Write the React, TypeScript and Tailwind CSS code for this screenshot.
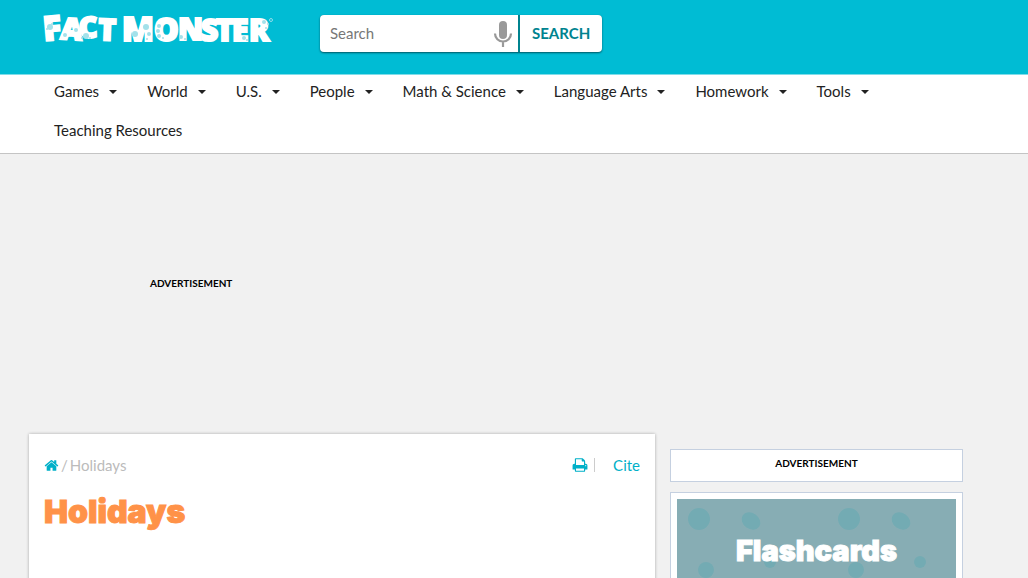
import React from 'react'

const navItems = [
    { label: 'Games', menu: true },
    { label: 'World', menu: true },
    { label: 'U.S.', menu: true },
    { label: 'People', menu: true },
    { label: 'Math & Science', menu: true },
    { label: 'Language Arts', menu: true },
    { label: 'Homework', menu: true },
    { label: 'Tools', menu: true },
    { label: 'Teaching Resources', menu: false },
]

const logoLetters = [
    { char: 'F', x: 15, y: 41, size: 34, turn: -5 },
    { char: 'A', x: 31, y: 39, size: 30, turn: 4 },
    { char: 'C', x: 50, y: 38, size: 29, turn: -2 },
    { char: 'T', x: 69, y: 40, size: 30, turn: 2 },
    { char: 'M', x: 93, y: 41, size: 33, turn: 0 },
    { char: 'O', x: 125, y: 41, size: 31, turn: 0 },
    { char: 'N', x: 149, y: 40, size: 30, turn: 0 },
    { char: 'S', x: 172, y: 41, size: 30, turn: 0 },
    { char: 'T', x: 187, y: 41, size: 30, turn: 0 },
    { char: 'E', x: 203, y: 41, size: 30, turn: 0 },
    { char: 'R', x: 220, y: 41, size: 30, turn: 0 },
]

const logoSpots = [
    [21, 27, 3], [23, 24, 1], [18, 29, 1], [47, 30, 2], [36, 35, 2], [57, 36, 3], [61, 38, 1], [53, 38, 1],
    [106, 34, 3], [117, 27, 3], [120, 34, 2], [118, 39, 1], [130, 26, 2], [129, 31, 2], [130, 36, 2], [134, 38, 1],
    [152, 37, 2], [156, 39, 1], [215, 38, 2], [218, 40, 1], [235, 22, 2], [239, 24, 1], [237, 28, 1],
]

const Logo = () => (
    <a href="#" aria-label="Fact Monster" className="block">
        <svg viewBox="0 0 245 50" className="block h-[50px] w-[245px]">
            <g fill="#fff" stroke="#fff" strokeWidth="2" fontFamily="Open Sans, sans-serif" fontWeight="800">
                {logoLetters.map((l, index) => (
                    <text key={index} x={l.x} y={l.y} fontSize={l.size} transform={`rotate(${l.turn} ${l.x} ${l.y})`}>
                        {l.char}
                    </text>
                ))}
            </g>
            <g fill="#a3e1ea">
                {logoSpots.map(([cx, cy, r], index) => (
                    <circle key={index} cx={cx} cy={cy} r={r} />
                ))}
            </g>
            <circle cx="242" cy="20" r="1.5" fill="none" stroke="#8fdcea" />
        </svg>
    </a>
)

const SearchForm = () => (
    <form className="flex h-[37px] rounded bg-[#00838f] shadow-[0_1px_2px_rgba(0,60,70,0.8)]" onSubmit={(e) => e.preventDefault()}>
        <div className="flex w-[198px] items-center rounded-l bg-white pl-2.5 pr-[5px]">
            <input
                type="text"
                aria-label="Search"
                placeholder="Search"
                className="min-w-0 flex-1 bg-transparent text-[15px] outline-none placeholder:text-[#777]"
            />
            <button type="button" aria-label="Search by voice">
                <svg viewBox="0 0 20 28" className="block h-7 w-5">
                    <rect x="6" y="1" width="8" height="18" rx="4" fill="#999" />
                    <path d="M2 13.500a8 8 0 0 0 16 0M10 21.500v5.500" fill="none" stroke="#999" strokeWidth="2.200" />
                </svg>
            </button>
        </div>
        <button type="submit" className="ml-0.5 rounded-r bg-white px-3 text-[15px] font-bold text-[#00838f]">
            SEARCH
        </button>
    </form>
)

const Nav = () => (
    <nav className="border-b border-[#c4c4c4] bg-white pl-[39px]">
        <ul className="flex flex-wrap">
            {navItems.map((item) => (
                <li key={item.label}>
                    <a href="#" className="flex h-[39px] items-center gap-2.5 px-[15px] pb-1.5 text-[15px] text-[#222]">
                        {item.label}
                        {item.menu && <span className="border-x-4 border-t-4 border-x-transparent border-t-[#222]" />}
                    </a>
                </li>
            ))}
        </ul>
    </nav>
)

const HomeIcon = () => (
    <svg viewBox="0 0 1792 1792" fill="currentColor" className="h-[15px] w-[15px]">
        <path d="M1472 992v480q0 26-19 45t-45 19h-384v-384h-256v384h-384q-26 0-45-19t-19-45v-480q0-1 .5-3t.5-3l575-474 575 474q1 2 1 6zm223-69l-62 74q-8 9-21 11h-3q-13 0-21-7l-692-577-692 577q-12 8-24 7-13-2-21-11l-62-74q-8-10-7-23.5t11-21.5l719-599q32-26 76-26t76 26l244 204v-195q0-14 9-23t23-9h192q14 0 23 9t9 23v408l219 182q10 8 11 21.5t-7 23.5z" />
    </svg>
)

const PrintIcon = () => (
    <svg viewBox="0 0 1792 1792" fill="currentColor" className="h-4 w-4">
        <path d="M448 1536h896v-256h-896v256zm0-640h896v-384h-160q-40 0-68-28t-28-68v-160h-640v640zm1152 64q0-26-19-45t-45-19-45 19-19 45 19 45 45 19 45-19 19-45zm128 0v416q0 13-9.5 22.5t-22.5 9.5h-224v160q0 40-28 68t-68 28h-960q-40 0-68-28t-28-68v-160h-224q-13 0-22.5-9.5t-9.5-22.5v-416q0-79 56.5-135.5t135.5-56.5h64v-544q0-40 28-68t68-28h672q40 0 88 20t76 48l152 152q28 28 48 76t20 88v256h64q79 0 135.5 56.5t56.5 135.5z" />
    </svg>
)

const Article = () => (
    <article className="min-w-0 flex-1 bg-white px-[15px] pt-[19px] shadow-[0_0_3px_rgba(0,0,0,0.3)]">
        <div className="flex items-center justify-between text-[15px] leading-6">
            <div className="flex items-center gap-0.5 text-[#bbb]">
                <a href="#" aria-label="Home" className="text-[#00b0c8]">
                    <HomeIcon />
                </a>
                <span className="flex gap-0.5">
                    <span>/</span>
                    <span>Holidays</span>
                </span>
            </div>
            <div className="flex items-center text-[#00b0c8]">
                <button type="button" aria-label="Print">
                    <PrintIcon />
                </button>
                <span className="ml-1.5 h-3.5 w-px bg-[#ccc]" />
                <a href="#" className="ml-[18px]">Cite</a>
            </div>
        </div>
        <h1 className="mt-[17px] font-[Inter,sans-serif] text-[32px] font-black leading-9 text-[#ff9248] [-webkit-text-stroke:1px_#ff9248]">
            Holidays
        </h1>
    </article>
)

const Flashcards = () => (
    <a href="#" className="block border border-[#c5d0e0] bg-white p-1.5">
        <div className="relative h-[104px] overflow-hidden bg-[#87adb4]">
            <svg className="absolute inset-0 h-full w-full" aria-hidden="true">
                <defs>
                    <pattern id="spots" width="150" height="104" patternUnits="userSpaceOnUse">
                        <g fill="#73abb3">
                            <ellipse cx="22" cy="20" rx="11" ry="11" />
                            <ellipse cx="74" cy="22" rx="10" ry="8" transform="rotate(35 74 22)" />
                            <ellipse cx="29" cy="71" rx="8" ry="8" />
                            <ellipse cx="93" cy="63" rx="6" ry="6" />
                        </g>
                    </pattern>
                </defs>
                <rect width="100%" height="100%" fill="url(#spots)" />
            </svg>
            <h2 className="relative text-center font-[Inter,sans-serif] text-[29px] font-black leading-[104px] text-white [-webkit-text-stroke:1px_#fff]">
                Flashcards
            </h2>
        </div>
    </a>
)

const App = () => {
    return (
        <div className="min-h-screen bg-[#f1f1f1] font-[Lato,sans-serif] text-[15px] text-[#222]">
            <header className="bg-[#00bcd4]">
                <div className="flex h-[75px] items-start gap-[46px] border-b border-[#7fdde9] pl-[29px]">
                    <Logo />
                    <div className="pt-[15px]">
                        <SearchForm />
                    </div>
                </div>
            </header>
            <Nav />
            <div className="h-[280px] pl-[150px] pt-[121px] text-[10px] font-bold leading-4 text-black">ADVERTISEMENT</div>
            <main className="flex gap-[15px] pl-[29px] pr-[65px]">
                <Article />
                <aside className="flex w-[293px] flex-col gap-2.5 pt-[15px]">
                    <div className="border border-[#c5d0e0] bg-white pb-2.5 pt-[5px] text-center text-[10px] font-bold leading-4 text-black">
                        ADVERTISEMENT
                    </div>
                    <Flashcards />
                </aside>
            </main>
        </div>
    )
}

export default App
